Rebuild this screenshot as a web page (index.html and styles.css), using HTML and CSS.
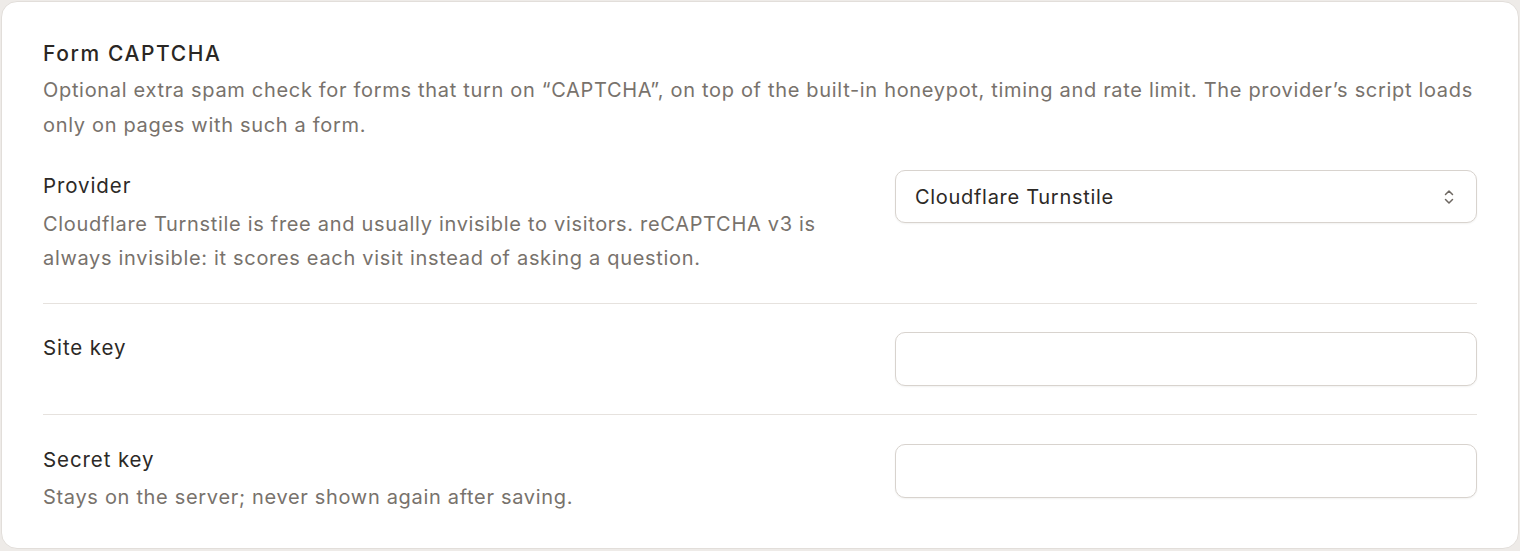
FILE: index.html
```html
<!DOCTYPE html>
<html lang="en">
<head>
<meta charset="utf-8">
<title>Form CAPTCHA</title>
<link rel="stylesheet" href="styles.css">
</head>
<body>
<section class="card">
  <header class="card-head">
    <h2 class="card-title">Form CAPTCHA</h2>
    <p class="card-desc">Optional extra spam check for forms that turn on “CAPTCHA”, on top of the built-in honeypot, timing and rate limit. The provider’s script loads only on pages with such a form.</p>
  </header>
  <div class="row row-first">
    <div class="row-text">
      <label class="row-label" for="provider">Provider</label>
      <p class="row-help">Cloudflare Turnstile is free and usually invisible to visitors. reCAPTCHA v3 is always invisible: it scores each visit instead of asking a question.</p>
    </div>
    <div class="select">
      <span class="select-value" id="provider">Cloudflare Turnstile</span>
      <svg class="select-icon" width="12" height="18" viewBox="0 0 12 18" fill="none" stroke="currentColor" stroke-width="1.5" stroke-linecap="round" stroke-linejoin="round"><path d="M2.5 6.5 6 3l3.5 3.5"/><path d="M2.5 11.5 6 15l3.5-3.5"/></svg>
    </div>
  </div>
  <div class="row">
    <div class="row-text">
      <label class="row-label" for="sitekey">Site key</label>
    </div>
    <input class="field" id="sitekey" type="text">
  </div>
  <div class="row row-last">
    <div class="row-text">
      <label class="row-label" for="secretkey">Secret key</label>
      <p class="row-help">Stays on the server; never shown again after saving.</p>
    </div>
    <input class="field" id="secretkey" type="password">
  </div>
</section>
</body>
</html>
```
FILE: styles.css
```css
html, body {
  margin: 0;
  padding: 0;
}
body {
  background: #eeebe8;
  font-family: Inter, "Noto Sans", sans-serif;
  padding: 1px 1px 2px 1px;
}
.card {
  background: #ffffff;
  border: 1px solid #e2deda;
  border-radius: 16px;
  padding: 37px 41px 0 41px;
  min-height: 548px;
  box-sizing: border-box;
}
.card-head {
  margin-bottom: 27px;
}
.card-title {
  margin: 0;
  font-size: 21px;
  line-height: 30px;
  font-weight: 500;
  color: #2a2724;
  letter-spacing: 1.6px;
}
.card-desc {
  margin: 4px 0 0 0;
  font-size: 20px;
  line-height: 35px;
  letter-spacing: 0.68px;
  color: #78726c;
}
.row {
  display: grid;
  grid-template-columns: 1fr 582px;
  column-gap: 52px;
  align-items: start;
  padding: 28px 0;
  border-top: 1px solid #e6e2de;
}
.row-first {
  border-top: none;
  padding-top: 0;
}
.row-last {
  padding-top: 29px;
  padding-bottom: 0;
}
.row-text {
  padding-top: 1px;
}
.row-label {
  display: block;
  font-size: 20.5px;
  line-height: 30px;
  letter-spacing: 0.9px;
  color: #2c2926;
}
.row-help {
  margin: 6px 0 0 0;
  font-size: 20px;
  line-height: 34px;
  letter-spacing: 0.68px;
  color: #78726c;
}
.row-last .row-help {
  margin-top: 5px;
}
.select {
  display: flex;
  align-items: center;
  justify-content: space-between;
  height: 53px;
  box-sizing: border-box;
  padding: 0 21px 0 19px;
  border: 1px solid #d8d3ce;
  border-radius: 10px;
  background: #fff;
  box-shadow: 0 1px 2px rgba(40, 30, 20, 0.06);
}
.select-value {
  font-size: 20px;
  letter-spacing: 0.7px;
  color: #2c2926;
}
.select-icon {
  color: #6e6862;
}
.field {
  display: block;
  width: 100%;
  height: 54px;
  box-sizing: border-box;
  margin: 0;
  padding: 0 19px;
  border: 1px solid #d8d3ce;
  border-radius: 10px;
  background: #fff;
  box-shadow: 0 1px 2px rgba(40, 30, 20, 0.06);
  font: inherit;
  font-size: 20px;
}
```
